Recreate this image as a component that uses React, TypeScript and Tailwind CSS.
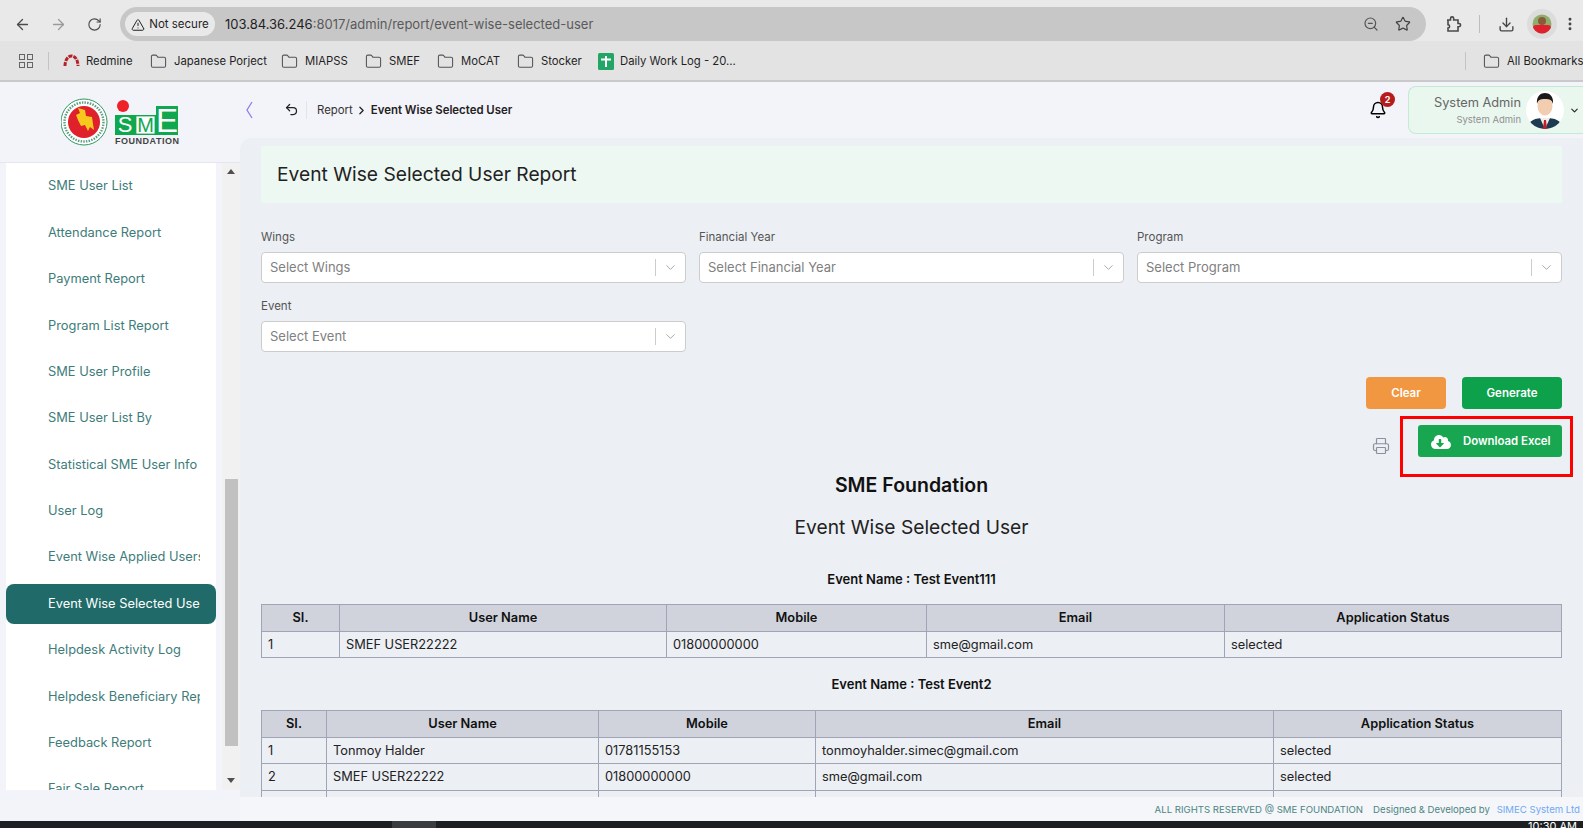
import {
  ArrowLeft,
  ArrowRight,
  Bell,
  ChevronDown,
  ChevronRight,
  Download,
  EllipsisVertical,
  Folder,
  Printer,
  RotateCw,
  Star,
  TriangleAlert,
  Undo2,
  ZoomOut,
} from 'lucide-react'
import { FaCloudDownloadAlt } from 'react-icons/fa'

const navItems = [
  'SME User List',
  'Attendance Report',
  'Payment Report',
  'Program List Report',
  'SME User Profile',
  'SME User List By',
  'Statistical SME User Info',
  'User Log',
  'Event Wise Applied Users',
  'Event Wise Selected User',
  'Helpdesk Activity Log',
  'Helpdesk Beneficiary Report',
  'Feedback Report',
  'Fair Sale Report',
]

const bookmarks = [
  { name: 'Japanese Porject', cls: 'w-[131px]' },
  { name: 'MIAPSS', cls: 'w-[84px]' },
  { name: 'SMEF', cls: 'w-[72px]' },
  { name: 'MoCAT', cls: 'w-[80px]' },
  { name: 'Stocker', cls: 'w-[81px]' },
]

// ── Browser bits ─────────────────────────────────────────────────────────────

function SheetsIcon() {
  return (
    <svg width="16" height="17" viewBox="0 0 16 17" className="shrink-0">
      <rect width="16" height="17" rx="1.5" fill="#22a565" />
      <path d="M3 6.5h10M8 3v11" stroke="#fff" strokeWidth="2" />
    </svg>
  )
}

function RedmineIcon() {
  return (
    <svg width="17" height="14" viewBox="0 0 17 14" className="shrink-0">
      <path d="M2 12C2 6 5 2 8.5 2S15 6 15 12" fill="none" stroke="#b5232a" strokeWidth="3" strokeDasharray="4 1" />
    </svg>
  )
}

function PuzzleIcon() {
  return (
    <svg width="18" height="18" viewBox="0 0 18 18" fill="none" stroke="#4a4a4a" strokeWidth="1.6" className="shrink-0">
      <path d="M3 5h3.5V3.5a1.6 1.6 0 0 1 3.2 0V5H14v3.5h1a1.6 1.6 0 0 1 0 3.2h-1V16H4v-3a1.6 1.6 0 0 0 0-3.2V5z" />
    </svg>
  )
}

function BrowserAvatar() {
  return (
    <div className="flex h-[30px] w-[30px] items-center justify-center rounded-full bg-[#dcdcdc]">
      <svg width="20" height="22" viewBox="0 0 20 22">
        <clipPath id="ba">
          <circle cx="10" cy="11" r="9.5" />
        </clipPath>
        <g clipPath="url(#ba)">
          <rect width="20" height="22" fill="#8fae6c" />
          <circle cx="10" cy="8" r="4" fill="#8a5a3c" />
          <rect x="1" y="12" width="18" height="10" rx="3" fill="#e0202c" />
        </g>
      </svg>
    </div>
  )
}

function BrowserChrome() {
  return (
    <div className="h-[82px] shrink-0 border-b-2 border-[#c9c9c9] bg-[#e3e3e3] text-[#3c3c3c]">
      <div className="flex h-[41px] items-start bg-[#e9e9e9] pt-[7px]">
        <div className="flex h-[34px] w-[120px] shrink-0 items-center pl-[14px] text-[#4b4b4b]">
          <ArrowLeft size={17} strokeWidth={1.8} />
          <ArrowRight size={17} strokeWidth={1.8} className="ml-[19px] text-[#9a9a9a]" />
          <RotateCw size={15} strokeWidth={1.8} className="ml-[20px]" />
        </div>
        <div className="flex h-[34px] w-[1306px] shrink-0 items-center rounded-full bg-[#c7c7c7] pl-[5px] pr-[15px]">
          <div className="flex h-[24px] w-[90px] items-center justify-center gap-1 rounded-full bg-[#e9e9e9] pt-px text-[11.5px] text-[#1f1f1f]">
            <TriangleAlert size={14} strokeWidth={1.7} />
            Not secure
          </div>
          <div className="ml-[10px] flex-1 pt-px text-[13px] text-[#5a5a5a]">
            <span className="text-[#1f1f1f]">103.84.36.246</span>:8017/admin/report/event-wise-selected-user
          </div>
          <ZoomOut size={16} strokeWidth={1.8} className="text-[#555]" />
          <Star size={16} strokeWidth={1.8} className="ml-4 text-[#444]" />
        </div>
        <div className="flex h-[34px] flex-1 items-center pl-[18px]">
          <PuzzleIcon />
          <div className="ml-[17px] h-[18px] w-px bg-[#bdbdbd]" />
          <Download size={17} strokeWidth={1.9} className="ml-[18px] text-[#444]" />
          <div className="ml-[12px]">
            <BrowserAvatar />
          </div>
          <EllipsisVertical size={16} strokeWidth={2.4} className="ml-[5px] shrink-0 text-[#444]" />
        </div>
      </div>
      <div className="flex h-[39px] items-center overflow-hidden pt-px text-[11.3px] text-[#1f1f1f]">
        <div className="ml-[19px] grid h-[14px] w-[14px] shrink-0 grid-cols-2 gap-[2px]">
          <span className="border border-[#666]" />
          <span className="border border-[#666]" />
          <span className="border border-[#666]" />
          <span className="border border-[#666]" />
        </div>
        <div className="ml-[15px] h-[18px] w-px shrink-0 bg-[#c4c4c4]" />
        <div className="ml-[14px] flex w-[87px] shrink-0 items-center gap-[6px]">
          <RedmineIcon />
          Redmine
        </div>
        {bookmarks.map((b) => (
          <div key={b.name} className={`flex shrink-0 items-center gap-[7px] ${b.cls}`}>
            <Folder size={17} strokeWidth={1.5} className="shrink-0 text-[#555]" />
            {b.name}
          </div>
        ))}
        <div className="flex w-[867px] shrink-0 items-center gap-[6px]">
          <SheetsIcon />
          Daily Work Log - 20...
        </div>
        <div className="h-[18px] w-px shrink-0 bg-[#c4c4c4]" />
        <div className="ml-[17px] flex shrink-0 items-center gap-[7px]">
          <Folder size={17} strokeWidth={1.5} className="shrink-0 text-[#555]" />
          All Bookmarks
        </div>
      </div>
    </div>
  )
}

// ── Logo and sidebar ─────────────────────────────────────────────────────────

function Logo() {
  return (
    <svg width="120" height="50" viewBox="0 0 120 50">
      <circle cx="23" cy="24" r="23" fill="#fff" stroke="#2c9a5b" strokeWidth="1" />
      <circle cx="23" cy="24" r="19.5" fill="none" stroke="#5f9c80" strokeWidth="2.4" strokeDasharray="1.5 1.2" />
      <circle cx="23" cy="24" r="16" fill="#e0202a" />
      <path d="M17 10l7 2 1 6 6 1 1 7 1 6-4-3-2 4-3-6-4 1-3-6-2-5 4-2z" fill="#f7c81e" />
      <circle cx="62" cy="8" r="6" fill="#ee2028" />
      <rect x="54" y="17" width="20" height="20" fill="#10a84f" />
      <rect x="74.7" y="17.7" width="19.6" height="18.6" fill="#fff" stroke="#10a84f" strokeWidth="1.4" />
      <rect x="95" y="8" width="22" height="29" fill="#10a84f" />
      <text x="64" y="34" textAnchor="middle" fontSize="22" fill="#fff" fontFamily="Liberation Sans, sans-serif">S</text>
      <text x="84.5" y="34" textAnchor="middle" fontSize="20" fill="#10a84f" fontFamily="Liberation Sans, sans-serif">M</text>
      <text x="106" y="34" textAnchor="middle" fontSize="33" fill="#fff" fontFamily="Liberation Sans, sans-serif">E</text>
      <text x="54" y="46" fontSize="9" fontWeight="700" fill="#444" fontFamily="Liberation Sans, sans-serif" textLength="64">FOUNDATION</text>
    </svg>
  )
}

function Sidebar() {
  return (
    <div className="flex w-[240px] shrink-0 flex-col bg-[#f3f3fa]">
      <div className="flex h-[81px] shrink-0 items-start border-b border-[#e6e6ee] pl-[61px] pt-[16px]">
        <Logo />
      </div>
      <div className="flex h-[627px] shrink-0 overflow-hidden">
        <div className="ml-[6px] h-full w-[210px] shrink-0 overflow-hidden bg-white pt-[3px]">
          {navItems.map((item) => {
            const active = item === 'Event Wise Selected User'
            return (
              <div
                key={item}
                className={`mb-[6.4px] flex h-[40px] items-center rounded-[8px] pl-[42px] text-[12.85px] ${
                  active ? 'bg-[#206b69] text-white' : 'text-[#3d7c7a]'
                }`}
              >
                <span className="w-[152px] overflow-hidden whitespace-nowrap">{item}</span>
              </div>
            )
          })}
        </div>
        <div className="ml-[6px] flex w-[18px] shrink-0 flex-col items-center bg-[#f1f1f1]">
          <div className="mt-[6px] h-0 w-0 border-x-[4px] border-b-[5px] border-x-transparent border-b-[#505050]" />
          <div className="mt-[305px] h-[267px] w-[13px] shrink-0 bg-[#c1c1c1]" />
          <div className="mt-[32px] h-0 w-0 border-x-[4px] border-t-[5px] border-x-transparent border-t-[#505050]" />
        </div>
      </div>
    </div>
  )
}

// ── Header ───────────────────────────────────────────────────────────────────

function ManAvatar() {
  return (
    <svg width="38" height="38" viewBox="0 0 38 38" className="shrink-0">
      <clipPath id="man">
        <circle cx="19" cy="19" r="19" />
      </clipPath>
      <g clipPath="url(#man)">
        <rect width="38" height="38" fill="#fff" />
        <path d="M2 38c0-9 7-11 17-11s17 2 17 11z" fill="#1d3b50" />
        <path d="M14 27h10l-5 11z" fill="#f1eeea" />
        <path d="M18 29h2l1 9h-4z" fill="#c0202a" />
        <ellipse cx="19" cy="15" rx="7.5" ry="9.5" fill="#f3cdb0" />
        <path d="M11 13c-1-8 4-11 8-11s9 3 8 11c-1-4-3-5-8-5s-7 1-8 5z" fill="#1a1a1a" />
      </g>
    </svg>
  )
}

function Header() {
  return (
    <div className="flex h-[56px] shrink-0 items-center bg-[#f3f3fa]">
      <svg width="8" height="18" viewBox="0 0 8 18" fill="none" stroke="#8a80e8" strokeWidth="1.3" className="ml-[5px]">
        <path d="M7 1L2 9l5 8" />
      </svg>
      <Undo2 size={15} strokeWidth={2} className="ml-[31px] -mt-[2px] text-[#222]" />
      <div className="ml-[7px] h-[18px] w-px bg-[#e3e3ea]" />
      <span className="ml-[10px] pt-[2px] text-[11.4px] text-[#333]">Report</span>
      <ChevronRight size={13} strokeWidth={2.4} className="ml-[2px] text-[#222]" />
      <span className="ml-[3px] pt-[2px] text-[11.4px] font-semibold text-[#222]">Event Wise Selected User</span>
      <div className="ml-auto flex items-center">
        <div className="relative mr-[21px]">
          <Bell size={18} strokeWidth={2} className="text-black" />
          <span className="absolute -right-[8px] -top-[9px] flex h-[15px] w-[15px] items-center justify-center rounded-full bg-[#b71c1c] text-[9px] font-bold text-white">
            2
          </span>
        </div>
        <div className="flex h-[48px] w-[175px] items-center rounded-l-[8px] border border-r-0 border-[#c3ead3] bg-[#e9f7ef] pl-[12px]">
          <div className="w-[100px] text-right">
            <div className="text-[12.8px] leading-[18px] text-[#666]">System Admin</div>
            <div className="pt-px text-[9.5px] leading-[14px] text-[#909090]">System Admin</div>
          </div>
          <div className="ml-[5px]">
            <ManAvatar />
          </div>
          <ChevronDown size={11} strokeWidth={2.4} className="ml-[5px] shrink-0 text-[#222]" />
        </div>
      </div>
    </div>
  )
}

// ── Form and report ──────────────────────────────────────────────────────────

function SelectField({ label, placeholder }: { label: string; placeholder: string }) {
  return (
    <div>
      <div className="mb-[7px] text-[11.5px] leading-[15px] text-[#555]">{label}</div>
      <div className="flex h-[31px] items-center rounded-[4px] border border-[#cccccc] bg-white pl-[8px] text-[13px] text-[#808080]">
        <span className="flex-1">{placeholder}</span>
        <div className="h-[17px] w-px bg-[#cccccc]" />
        <ChevronDown size={15} strokeWidth={1.6} className="mx-[7px] text-[#aaa]" />
      </div>
    </div>
  )
}

const th = 'h-[26.5px] border border-[#a0a4b4] bg-[#d0d3dc] p-0 text-[12.8px] font-semibold text-[#111]'
const td = 'h-[26.5px] border border-[#a0a4b4] px-[6px] py-0 text-left text-[12.8px] text-[#222]'

function Report() {
  return (
    <div className="h-[659px] shrink-0 overflow-hidden rounded-tl-[12px] bg-[#eceff4] pl-[21px] pr-[21px] pt-[8px]">
      <div className="flex h-[57px] items-center bg-[#eef8f3] pl-[16px] text-[19.2px] text-[#222]">
        Event Wise Selected User Report
      </div>

      <div className="mt-[27px] grid grid-cols-3 gap-x-[13px] gap-y-[16px]">
        <SelectField label="Wings" placeholder="Select Wings" />
        <SelectField label="Financial Year" placeholder="Select Financial Year" />
        <SelectField label="Program" placeholder="Select Program" />
        <SelectField label="Event" placeholder="Select Event" />
      </div>

      <div className="mt-[25px] flex justify-end gap-[16px]">
        <button className="h-[32px] w-[80px] rounded-[4px] bg-[#f29741] pt-px text-[11.5px] font-semibold text-white">Clear</button>
        <button className="h-[32px] w-[100px] rounded-[4px] bg-[#0ca14a] pt-px text-[11.5px] font-semibold text-white">Generate</button>
      </div>

      <div className="mt-[16px] flex h-[32px] items-center justify-end">
        <Printer size={18} strokeWidth={1.6} className="mr-[28px] mt-[9px] text-[#8b90a0]" />
        <button className="flex h-[32px] w-[144px] items-center rounded-[3px] bg-[#18a651] pl-[13px] pt-px text-[11.4px] font-semibold text-white">
          <FaCloudDownloadAlt size={20} />
          <span className="ml-[12px]">Download Excel</span>
        </button>
      </div>

      <div className="mt-[16px] text-center text-[19.5px] font-semibold leading-[24px] text-[#111]">SME Foundation</div>
      <div className="mt-[18px] text-center text-[19.2px] leading-[24px] text-[#222]">Event Wise Selected User</div>
      <div className="mt-[30px] text-center text-[13px] font-semibold leading-[20px] text-[#111]">Event Name : Test Event111</div>

      <table className="mt-[15px] w-full table-fixed border-collapse">
        <thead>
          <tr>
            <th className={`w-[78px] ${th}`}>SI.</th>
            <th className={`w-[327px] ${th}`}>User Name</th>
            <th className={`w-[260px] ${th}`}>Mobile</th>
            <th className={`w-[298px] ${th}`}>Email</th>
            <th className={th}>Application Status</th>
          </tr>
        </thead>
        <tbody>
          <tr>
            <td className={td}>1</td>
            <td className={td}>SMEF USER22222</td>
            <td className={td}>01800000000</td>
            <td className={td}>sme@gmail.com</td>
            <td className={td}>selected</td>
          </tr>
        </tbody>
      </table>

      <div className="mt-[16px] text-center text-[13px] font-semibold leading-[20px] text-[#111]">Event Name : Test Event2</div>

      <table className="mt-[16px] w-full table-fixed border-collapse">
        <thead>
          <tr>
            <th className={`w-[65px] ${th}`}>SI.</th>
            <th className={`w-[272px] ${th}`}>User Name</th>
            <th className={`w-[217px] ${th}`}>Mobile</th>
            <th className={`w-[458px] ${th}`}>Email</th>
            <th className={th}>Application Status</th>
          </tr>
        </thead>
        <tbody>
          <tr>
            <td className={td}>1</td>
            <td className={td}>Tonmoy Halder</td>
            <td className={td}>01781155153</td>
            <td className={td}>tonmoyhalder.simec@gmail.com</td>
            <td className={td}>selected</td>
          </tr>
          <tr>
            <td className={td}>2</td>
            <td className={td}>SMEF USER22222</td>
            <td className={td}>01800000000</td>
            <td className={td}>sme@gmail.com</td>
            <td className={td}>selected</td>
          </tr>
          <tr>
            <td className={td} />
            <td className={td} />
            <td className={td} />
            <td className={td} />
            <td className={td} />
          </tr>
        </tbody>
      </table>
    </div>
  )
}

// ── Page ─────────────────────────────────────────────────────────────────────

export default function App() {
  return (
    <div className="relative flex h-[828px] w-[1583px] flex-col overflow-hidden bg-[#f3f3fa] [font-family:Inter,sans-serif]">
      <div className="[font-family:'Open_Sans',sans-serif]">
        <BrowserChrome />
      </div>
      <div className="flex h-[739px] shrink-0">
        <div>
          <Sidebar />
          <div className="h-[31px] bg-[#f3f3fa]" />
        </div>
        <div className="flex min-w-0 flex-1 flex-col">
          <Header />
          <Report />
          <div className="flex h-[24px] shrink-0 items-center justify-end gap-[10px] bg-[#f5f6f9] pr-[3px] pt-[2px] text-[9.6px] text-[#4c8583]">
            <span>ALL RIGHTS RESERVED @ SME FOUNDATION</span>
            <span>
              Designed &amp; Developed by <span className="ml-[4px] text-[#6ea8f5]">SIMEC System Ltd</span>
            </span>
          </div>
        </div>
      </div>
      <div className="relative flex-1 bg-[#1d2023]">
        <div className="absolute -bottom-[4px] right-[6px] text-[11px] leading-[11px] text-white">10:30 AM</div>
        <div className="absolute left-[392px] top-0 h-[7px] w-[44px] bg-[#3a3d40]" />
      </div>
      <div className="pointer-events-none absolute left-[1400px] top-[416px] h-[61px] w-[173px] border-[3px] border-[#ff0000]" />
    </div>
  )
}
